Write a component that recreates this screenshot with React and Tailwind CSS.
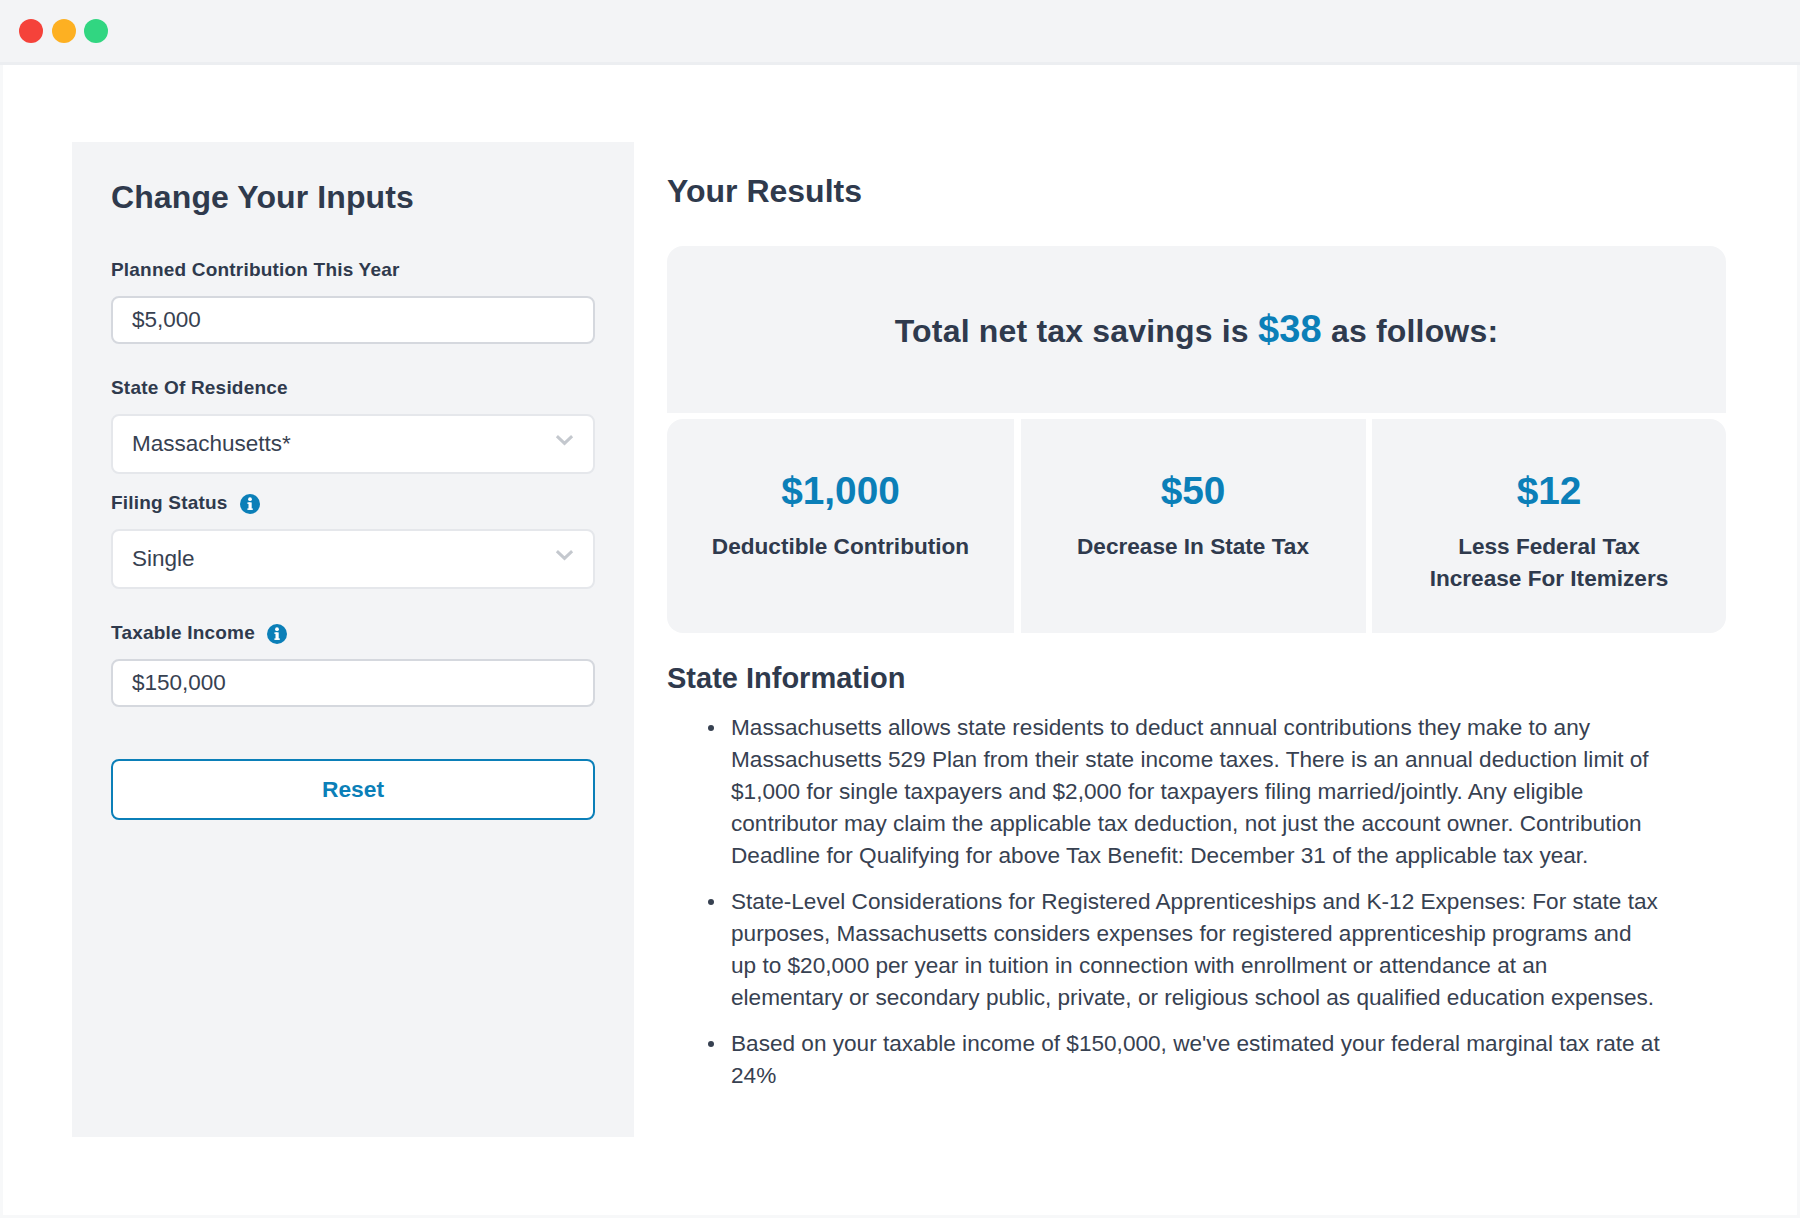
import React from "react";

const F = "font-['Liberation_Sans',Arial,sans-serif]";

function Info() {
  return (
    <svg viewBox="0 0 20 20" className="w-5 h-5 shrink-0 translate-y-[1px]" aria-hidden="true">
      <circle cx="10" cy="10" r="10" fill="#0b7fb8" />
      <rect x="8.5" y="8.4" width="3.2" height="7.2" fill="#fff" />
      <rect x="7.4" y="8.4" width="3" height="1.5" fill="#fff" />
      <rect x="7.4" y="14.4" width="5.4" height="1.5" fill="#fff" />
      <circle cx="10" cy="5.2" r="1.9" fill="#fff" />
    </svg>
  );
}

function Chevron() {
  return (
    <svg viewBox="0 0 20 12" className="w-[19px] h-3 absolute right-[19px] top-[18px]" aria-hidden="true">
      <path d="M2 2 L10 9.5 L18 2" fill="none" stroke="#c4c8ce" strokeWidth="3.2" />
    </svg>
  );
}

function Label({ children, className = "" }) {
  return <div className={`flex items-center gap-3 text-[19px] font-bold leading-[24px] tracking-[0.2px] text-[#2f3a4d] ${className}`}>{children}</div>;
}

function TextBox({ value, className = "" }) {
  return (
    <input
      readOnly
      value={value}
      className={`block w-[484px] h-[48px] rounded-lg border-2 border-[#d5d8de] bg-white pl-[19px] text-[22.5px] text-[#374151] outline-none ${className}`}
    />
  );
}

function Select({ value, className = "" }) {
  return (
    <div className={`relative flex items-center w-[484px] h-[60px] rounded-lg border-2 border-[#e5e7eb] bg-white pl-[19px] text-[22.5px] text-[#374151] ${className}`}>
      {value}
      <Chevron />
    </div>
  );
}

function Stat({ value, children }) {
  return (
    <div className="bg-[#f3f4f6] pt-[49px] text-center">
      <div className="text-[38.8px] font-bold leading-[46px] text-[#0b7fb8]">{value}</div>
      <div className="mt-[17px] text-[22.6px] font-bold leading-[32px] text-[#2f3a4d]">{children}</div>
    </div>
  );
}

function Item({ children }) {
  return (
    <li className="flex gap-[17px]">
      <span className="w-[6px] h-[6px] mt-[13px] rounded-full bg-[#374151] shrink-0" />
      <span>{children}</span>
    </li>
  );
}

export default function App() {
  return (
    <div className={`${F} w-[1800px] h-[1218px] bg-[#f7f8f9] flex flex-col overflow-hidden`}>
      <header className="h-[62px] bg-[#f3f4f6] flex items-center gap-[8.5px] pl-[19px] shrink-0 border-b-[3px] border-[#eceef1] box-content">
        <span className="w-6 h-6 rounded-full bg-[#f5423a]" />
        <span className="w-6 h-6 rounded-full bg-[#fdb022]" />
        <span className="w-6 h-6 rounded-full bg-[#31d681]" />
      </header>
      <main className="flex-1 mx-[3px] mb-[3px] bg-white pl-[69px] pt-[77px] flex">
        <aside className="w-[562px] h-[995px] bg-[#f3f4f6] pl-[39px] pt-[34px] shrink-0">
          <h2 className="text-[32px] font-bold leading-[42px] tracking-[0.1px] text-[#2f3a4d]">Change Your Inputs</h2>
          <Label className="mt-[40px]">Planned Contribution This Year</Label>
          <TextBox value="$5,000" className="mt-[14px]" />
          <Label className="mt-[32px]">State Of Residence</Label>
          <Select value="Massachusetts*" className="mt-[14px]" />
          <Label className="mt-[17px]">Filing Status <Info /></Label>
          <Select value="Single" className="mt-[14px]" />
          <Label className="mt-[32px]">Taxable Income <Info /></Label>
          <TextBox value="$150,000" className="mt-[14px]" />
          <button className="mt-[52px] block w-[484px] h-[61px] rounded-lg border-2 border-[#0b7fb8] bg-white text-[22.8px] font-bold text-[#0b7fb8]">Reset</button>
        </aside>
        <section className="ml-[33px] w-[1059px]">
          <h2 className="mt-[28px] text-[32px] font-bold leading-[42px] text-[#2f3a4d]">Your Results</h2>
          <div className="mt-[34px] h-[167px] rounded-t-2xl bg-[#f3f4f6] flex items-center justify-center text-[32px] font-bold tracking-[0.18px] text-[#2f3a4d]">
            <span>Total net tax savings is <span className="text-[38px] text-[#0b7fb8]">$38</span> as follows:</span>
          </div>
          <div className="mt-[6px] h-[214px] grid grid-cols-[347px_345px_354px] gap-x-[6.5px] rounded-2xl overflow-hidden">
            <Stat value="$1,000">Deductible Contribution</Stat>
            <Stat value="$50">Decrease In State Tax</Stat>
            <Stat value="$12">Less Federal Tax<br />Increase For Itemizers</Stat>
          </div>
          <h3 className="mt-[25px] text-[29px] font-bold leading-[40px] text-[#2f3a4d]">State Information</h3>
          <ul className="mt-[14px] ml-[41px] w-[954px] text-[22.6px] leading-[32px] text-[#374151] flex flex-col gap-[14px]">
            <Item>Massachusetts allows state residents to deduct annual contributions they make to any Massachusetts 529 Plan from their state income taxes. There is an annual deduction limit of $1,000 for single taxpayers and $2,000 for taxpayers filing married/jointly. Any eligible contributor may claim the applicable tax deduction, not just the account owner. Contribution Deadline for Qualifying for above Tax Benefit: December 31 of the applicable tax year.</Item>
            <Item>State-Level Considerations for Registered Apprenticeships and K-12 Expenses: For state tax purposes, Massachusetts considers expenses for registered apprenticeship programs and up to $20,000 per year in tuition in connection with enrollment or attendance at an elementary or secondary public, private, or religious school as qualified education expenses.</Item>
            <Item>Based on your taxable income of $150,000, we've estimated your federal marginal tax rate at 24%</Item>
          </ul>
        </section>
      </main>
    </div>
  );
}
